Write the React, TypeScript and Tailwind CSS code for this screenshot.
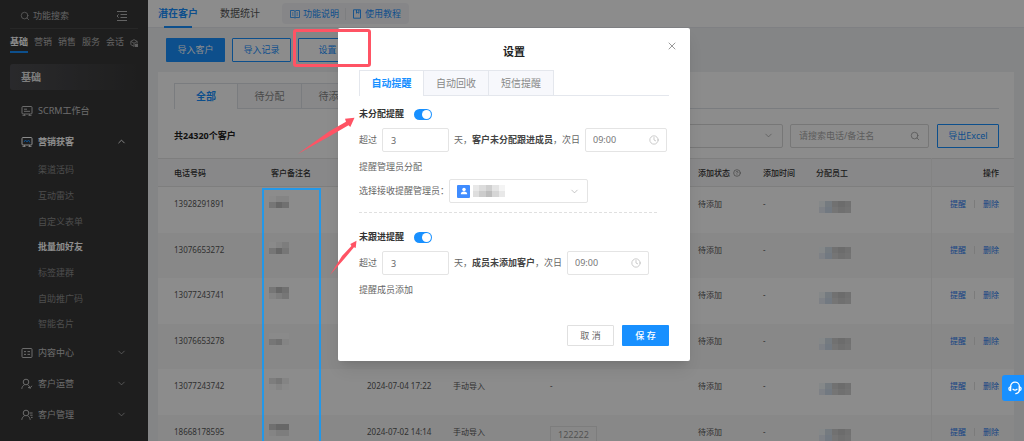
import type { ReactNode } from "react";
import { ChevronDown, ChevronUp, CircleHelp, Clock, Search, X } from "lucide-react";
import clsx from "clsx";

const topTabs = ["营销", "销售", "服务", "会话"];

const subMenu = ["渠道活码", "互动雷达", "自定义表单", "批量加好友", "标签建群", "自助推广码", "智能名片"];

const rows = [
  { phone: "13928291891", shade: [0, 1, 1, 3, 5, 4] },
  { phone: "13076653272", shade: [0, 1, 2, 3, 5, 3] },
  { phone: "13077243741", shade: [3, 5, 4, 1, 2, 3] },
  { phone: "13076653278", shade: [0, 0, 0, 3, 4, 1] },
  { phone: "13077243742", time: "2024-07-04 17:22", source: "手动导入", tag: "-", shade: [2, 3, 1, 0, 1, 0] },
  { phone: "18668178595", time: "2024-07-02 14:14", source: "手动导入", tag: "122222", shade: [4, 5, 5, 1, 2, 2] },
];

const shades = ["#fbfbfb", "#f0f0f0", "#e4e4e4", "#d8d8d8", "#cccccc", "#bcbcbc"];
const staffShades = ["#f3f7fa", "#d6e1ea", "#cecece", "#c5c5c5", "#cecece", "#e6ecf4", "#cfddec", "#d6d6d6", "#cccccc", "#d2d2d2"];
const adminShades = ["#e8e8e8", "#dcdcdc", "#cfcfcf", "#e4e4e4", "#f4f4f4", "#dedede", "#cccccc", "#bdbdbd", "#d6d6d6", "#e8e8e8"];

function Mosaic({ colors, cols }: { colors: string[]; cols: string }) {
  return (
    <span className={clsx("inline-grid align-top", cols)} aria-hidden="true">
      {colors.map((c, i) => (
        <span key={i} className="h-1.5" style={{ background: c }} />
      ))}
    </span>
  );
}

function BoardIcon({ blue }: { blue?: boolean }) {
  return (
    <svg viewBox="0 0 12 12" className="size-3" fill="none" stroke="currentColor">
      <rect x="1" y="1.5" width="10" height="7.5" rx="1" />
      <path d="M3.5 9v1.5M8.5 9v1.5M1.500 10.500h3M7.500 10.500h3" strokeWidth=".8" />
      {blue ? <path d="M3 6l1.5-2 1.5 2L7.5 4 9 6.5" stroke="#1890ff" /> : <path d="M3 4.2h3M3 6.3h6" />}
    </svg>
  );
}

function ListIcon() {
  return (
    <svg viewBox="0 0 12 12" className="size-3" fill="none" stroke="currentColor">
      <rect x="1" y="1.5" width="10" height="9" rx="1" />
      <path d="M3 4.6h2M6.5 4.6H9M3 7.4h2M6.5 7.4H9" />
    </svg>
  );
}

function UserIcon({ lines }: { lines?: boolean }) {
  return (
    <svg viewBox="0 0 12 12" className="size-3" fill="none" stroke="currentColor">
      <circle cx="5" cy="4" r="2.8" />
      <path d="M.8 10.8c.2-2 1.2-3.2 2.7-4M6.6 6.8c1.5.8 2.2 1.8 2.6 4" />
      {lines ? <path d="M8.6 4h3M9.2 6.2h2.4M10 8.4h1.6" /> : <path d="M7 9.6h2.5l1.4-1.8" />}
    </svg>
  );
}

function MenuItem({ icon, label, arrow, active }: { icon: ReactNode; label: string; arrow?: "up" | "down"; active?: boolean }) {
  return (
    <a href="#" className={clsx("flex h-[31px] items-center px-[11px] text-[9px]", active ? "font-bold text-white" : "text-[#c4c4c4]")}>
      {icon}
      <span className="ml-[5px] flex-1">{label}</span>
      {arrow === "up" && <ChevronUp size={11} strokeWidth={2} />}
      {arrow === "down" && <ChevronDown size={11} strokeWidth={1.5} />}
    </a>
  );
}

function Sidebar() {
  return (
    <aside className="w-[148px] shrink-0 bg-[#383838] px-2.5 text-[#b4b4b4]">
      <div className="flex h-[29px] items-center border-b border-[#484848] pl-2.5 pr-2.5 pt-1">
        <Search size={10} strokeWidth={1.8} />
        <span className="ml-[3px] flex-1 text-[9px]">功能搜索</span>
        <svg viewBox="0 0 12 12" className="size-3" stroke="currentColor" fill="none">
          <path d="M1 1.5h10M4.5 4.5H11M4.5 7.5H11M1 10.5h10M2.6 4.4L1 6l1.6 1.6" />
        </svg>
      </div>

      <nav className="flex h-6 items-center justify-between text-[9px]">
        <a href="#" className="flex h-6 items-center border-b-2 border-[#1890ff] pt-1 font-bold text-white">基础</a>
        {topTabs.map((t) => (
          <a key={t} href="#" className="pt-0.5">{t}</a>
        ))}
        <svg viewBox="0 0 10 10" className="mt-1 size-2" fill="none" stroke="currentColor">
          <path d="M5 9.2L1 7V3l4-2.2L9 3v2.4M1 3l4 2.2L9 3M5 5.2v4" />
          <rect x="6.5" y="6.5" width="3" height="3" fill="currentColor" />
        </svg>
      </nav>

      <div className="mt-[11px] flex h-[26px] items-center rounded-[3px] bg-linear-to-r from-[#4c4c50] to-[#383838] px-[11px] text-[10px] font-bold text-[#e8e8e8]">
        基础
      </div>

      <nav className="mt-[5px]">
        <MenuItem icon={<BoardIcon />} label="SCRM工作台" />
        <MenuItem icon={<BoardIcon blue />} label="营销获客" arrow="up" active />
        <ul className="grid h-[180px] grid-rows-7 pl-7 text-[9px]">
          {subMenu.map((s) => (
            <li key={s} className="flex items-center">
              <a href="#" className={s === "批量加好友" ? "font-bold text-white" : "text-[#8c8c8c]"}>{s}</a>
            </li>
          ))}
        </ul>
        <MenuItem icon={<ListIcon />} label="内容中心" arrow="down" />
        <MenuItem icon={<UserIcon />} label="客户运营" arrow="down" />
        <MenuItem icon={<UserIcon lines />} label="客户管理" arrow="down" />
      </nav>
    </aside>
  );
}

function Header() {
  return (
    <header className="flex h-7 items-center border-b border-[#e8eaee] bg-white pl-2.5">
      <a href="#" className="relative flex h-7 items-center text-[10px] font-bold text-[#1890ff]">
        潜在客户
        <span className="absolute inset-x-1.5 bottom-0 h-0.5 bg-[#1890ff]" />
      </a>
      <a href="#" className="ml-[22px] text-[10px] text-[#555]">数据统计</a>

      <div className="ml-[22px] flex h-[21px] items-center rounded-sm bg-[#f4f5f8] px-2 text-[9px] text-[#1890ff]">
        <a href="#" className="flex items-center gap-[3px]">
          <svg viewBox="0 0 10 10" className="size-2.5" fill="none" stroke="currentColor">
            <path d="M5 2v7M.5 1.500H4l1 .8 1-.8h3.500v7H6l-1 .6-1-.6H.5zM2 4h1.500M2 6h1.500M6.500 4H8M6.500 6H8" strokeWidth=".8" />
          </svg>
          功能说明
        </a>
        <span className="mx-1.5 h-3 w-px bg-[#e3e5e9]" />
        <a href="#" className="flex items-center gap-[3px]">
          <svg viewBox="0 0 10 10" className="size-2.5" fill="none" stroke="currentColor">
            <path d="M1.500.8h7v8.400h-7zM4.500 1v3.200l1.200-.8 1.200.8V1" strokeWidth=".9" />
          </svg>
          使用教程
        </a>
      </div>
    </header>
  );
}

function CustomerTable() {
  return (
    <table className="w-full table-fixed border-collapse text-left text-[8px] text-[#595959]">
      <colgroup>
        <col className="w-[113px]" />
        <col className="w-24" />
        <col className="w-[86px]" />
        <col className="w-[97px]" />
        <col className="w-[148px]" />
        <col className="w-[65px]" />
        <col className="w-[53px]" />
        <col />
        <col className="w-[83px]" />
      </colgroup>
      <thead>
        <tr className="h-7 border-y border-[#e6e6e6] bg-[#f8f8f9] text-[#333]">
          <th className="pl-4 font-medium">电话号码</th>
          <th className="font-medium">客户备注名</th>
          <th />
          <th />
          <th />
          <th className="font-medium">
            <span className="flex items-center gap-[3px]">
              添加状态 <CircleHelp size={8} className="text-[#777]" />
            </span>
          </th>
          <th className="font-medium">添加时间</th>
          <th className="font-medium">分配员工</th>
          <th className="border-l border-[#eee] pr-[15px] text-right font-medium">操作</th>
        </tr>
      </thead>
      <tbody>
        {rows.map((r) => (
          <tr key={r.phone} className="h-[46px] align-top leading-3 even:h-[45px] even:bg-[#f8f8f8]">
            <td className="pl-4 pt-[11px]">{r.phone}</td>
            <td className="pt-[9px]">
              <Mosaic cols="-ml-0.5 w-5 grid-cols-3" colors={r.shade.map((s) => shades[s])} />
            </td>
            <td className="pt-[11px]">{r.time}</td>
            <td className="pt-[11px]">{r.source}</td>
            <td className="pt-[11px]">
              {r.tag === "122222" ? (
                <span className="inline-block border border-[#e4e4e4] px-[7px] py-0.5 text-[9px] text-[#999]">{r.tag}</span>
              ) : r.tag}
            </td>
            <td className="pt-[11px]">待添加</td>
            <td className="pt-[11px]">-</td>
            <td className="pt-3.5">
              <Mosaic cols="ml-[3px] w-8 grid-cols-5" colors={staffShades} />
            </td>
            <td className="border-l border-[#eee] pr-[15px] pt-[11px]">
              <div className="flex items-center justify-end text-[#2a7cf0]">
                <a href="#">提醒</a>
                <span className="mx-2 h-2 w-px bg-[#e0e0e0]" />
                <a href="#">删除</a>
              </div>
            </td>
          </tr>
        ))}
      </tbody>
    </table>
  );
}

function Toggle({ label }: { label: string }) {
  return (
    <label className="flex h-4 items-center text-[9px] font-bold text-[#333]">
      {label}
      <input type="checkbox" role="switch" defaultChecked className="peer sr-only" />
      <span className="ml-2.5 flex h-[11px] w-[18px] items-center justify-end rounded-full bg-[#1890ff] p-px">
        <span className="size-[9px] rounded-full bg-white" />
      </span>
    </label>
  );
}

function RemindRow({ who, after }: { who: string; after: string }) {
  return (
    <>
      <div className="mt-1.5 flex h-6 items-center whitespace-nowrap">
        超过
        <input aria-label="天数" defaultValue="3" className="ml-[5px] h-6 w-[67px] rounded-[2px] border border-[#e4e4e4] px-2 text-[9px] outline-none" />
        <span className="ml-[5px]">天，</span>
        <b className="text-[#444]">{who}</b>
        <span>，次日</span>
        <span className="ml-[5px] flex h-6 w-[82px] items-center rounded-[2px] border border-[#e4e4e4] px-[7px]">
          <input aria-label="提醒时间" defaultValue="09:00" className="min-w-0 flex-1 text-[9px] text-[#777] outline-none" />
          <Clock size={10} strokeWidth={1.8} className="text-[#bbb]" />
        </span>
      </div>
      <p className="mt-[7px] h-4 leading-4">{after}</p>
    </>
  );
}

function SettingsDialog() {
  return (
    <div role="dialog" aria-label="设置" className="relative w-[352px] rounded-[2px] bg-white px-[21px] pb-[15px] text-[9px] text-[#666] shadow-lg">
      <button aria-label="关闭" className="absolute right-3 top-3 text-[#999]">
        <X size={12} strokeWidth={2} />
      </button>
      <h2 className="pt-4 text-center text-[11px] font-bold leading-4 text-[#222]">设置</h2>

      <div className="mt-2.5 flex h-[26px] border-b border-[#e4e7ed] text-[10px] text-[#888]">
        <button className="-mb-px w-[65px] border-x border-t border-[#e4e7ed] bg-white font-bold text-[#1890ff]">自动提醒</button>
        <button className="w-[65px] border-r border-t border-[#e4e7ed] bg-[#f7f8fc]">自动回收</button>
        <button className="w-[65px] border-r border-t border-[#e4e7ed] bg-[#f7f8fc]">短信提醒</button>
      </div>

      <section className="pt-2.5">
        <Toggle label="未分配提醒" />
        <RemindRow who="客户未分配跟进成员" after="提醒管理员分配" />
        <div className="mt-1 flex items-center">
          选择接收提醒管理员：
          <button aria-haspopup="listbox" className="flex h-6 w-[139px] items-center rounded-[2px] border border-[#e4e4e4] px-[7px]">
            <span className="flex size-[13px] items-center justify-center rounded-[1px] bg-[#3f8cff]">
              <svg viewBox="0 0 10 10" className="size-2 fill-white">
                <circle cx="5" cy="3" r="2.2" />
                <path d="M1 9c0-2.200 1.500-3.400 4-3.400S9 6.800 9 9z" />
              </svg>
            </span>
            <Mosaic cols="ml-[3px] w-8 grid-cols-5" colors={adminShades} />
            <ChevronDown size={11} strokeWidth={1.5} className="ml-auto text-[#aaa]" />
          </button>
        </div>
      </section>

      <hr className="mr-3 mt-[9px] border-dashed border-[#e0e0e0]" />

      <section className="pt-4">
        <Toggle label="未跟进提醒" />
        <RemindRow who="成员未添加客户" after="提醒成员添加" />
      </section>

      <div className="mt-[27px] flex justify-end gap-2">
        <button className="h-[21px] w-[47px] rounded-[1px] border border-[#e0e0e0]">取 消</button>
        <button className="h-[21px] w-[47px] rounded-[1px] bg-[#1890ff] font-medium text-white">保 存</button>
      </div>
    </div>
  );
}

export default function App() {
  return (
    <div className="relative flex h-screen overflow-hidden bg-[#f0f2f5] font-['Noto_Sans','Noto_Sans_CJK_SC',sans-serif]">
      <Sidebar />

      <main className="min-w-0 flex-1">
        <Header />

        <div className="flex gap-[7px] pb-2.5 pl-[18px] pt-2.5 text-[9px] text-[#1890ff]">
          <button className="h-6 w-[59px] rounded-[1px] bg-[#1890ff] text-white">导入客户</button>
          <button className="h-6 w-[59px] rounded-[1px] border border-[#1890ff] bg-white">导入记录</button>
          <button className="h-6 w-[59px] rounded-[1px] border border-[#1890ff] bg-white">设置</button>
        </div>

        <section className="mx-2.5 bg-white pt-[11px]">
          <div className="ml-4 mr-[15px] flex h-[26px] border-b border-[#dfe2e8] text-[10px] text-[#888]">
            <button className="-mb-px w-16 border-x border-t border-[#dfe2e8] bg-white font-bold text-[#1890ff]">全部</button>
            <button className="w-16 border-r border-t border-[#dfe2e8] bg-[#f7f8fa]">待分配</button>
            <button className="w-16 border-r border-t border-[#dfe2e8] bg-[#f7f8fa]">待添加</button>
          </div>

          <div className="ml-4 mr-[15px] flex h-[49px] items-center pt-1 text-[9px]">
            <b className="flex-1 text-[#222]">共24320个客户</b>
            <select aria-label="状态" className="h-6 w-[139px] appearance-none rounded-[2px] border border-[#d9d9d9]" />
            <ChevronDown size={11} strokeWidth={1.5} className="-ml-5 mr-[9px] text-[#999]" />
            <label className="ml-[7px] flex h-6 w-[139px] items-center rounded-[2px] border border-[#d9d9d9] px-2">
              <input aria-label="搜索" placeholder="请搜索电话/备注名" className="min-w-0 flex-1 outline-none placeholder:text-[#aaa]" />
              <Search size={10} strokeWidth={1.8} className="text-[#999]" />
            </label>
            <button className="ml-2 h-6 w-[62px] rounded-[1px] border border-[#1890ff] text-[#1890ff]">导出Excel</button>
          </div>

          <CustomerTable />
        </section>
      </main>

      {/* Mask and dialog */}
      <div className="absolute inset-0 flex items-start justify-center bg-black/45 pl-1 pt-7">
        <SettingsDialog />
      </div>

      <button aria-label="客服" className="absolute right-0 top-[375px] flex h-[26px] w-[22px] items-center justify-end rounded-l-[3px] bg-[#1890ff] pr-0.5 text-white">
        <svg viewBox="0 0 14 14" className="size-3.5" fill="none" stroke="currentColor" strokeWidth="1.3" strokeLinecap="round">
          <path d="M2.600 6V5.500a4.400 4.400 0 0 1 8.800 0V9c0 2-1.500 3.300-3.600 3.600M5 8.300c1.200.9 2.800.9 4 0" />
          <path d="M2.600 5.800C.3 6 .3 9.400 2.600 9.600zM11.400 5.800c2.300.2 2.300 3.600 0 3.800z" />
        </svg>
      </button>

      {/* Guide marks */}
      <div className="pointer-events-none absolute left-[293px] top-[29px] h-[38px] w-[78px] rounded-[3px] border-[3px] border-[#ff5364]" />
      <div className="pointer-events-none absolute -bottom-1 left-[262px] top-[188px] w-[59px] border-2 border-[#0a9bff]/80" />
      <svg className="pointer-events-none absolute left-[296px] top-[105px] h-[180px] w-[70px] fill-[#ff5364]" viewBox="0 0 70 180">
        <path d="M1.700 49L33 26.500L50 16.800L49 13.700L58.500 12.700L54.300 22L52.500 20.300L34 31Z" />
        <path d="M34 170L46 151L55.400 141L54.300 139L60.500 135.700L59.700 143L58 142.300L49 153Z" />
      </svg>
    </div>
  );
}
